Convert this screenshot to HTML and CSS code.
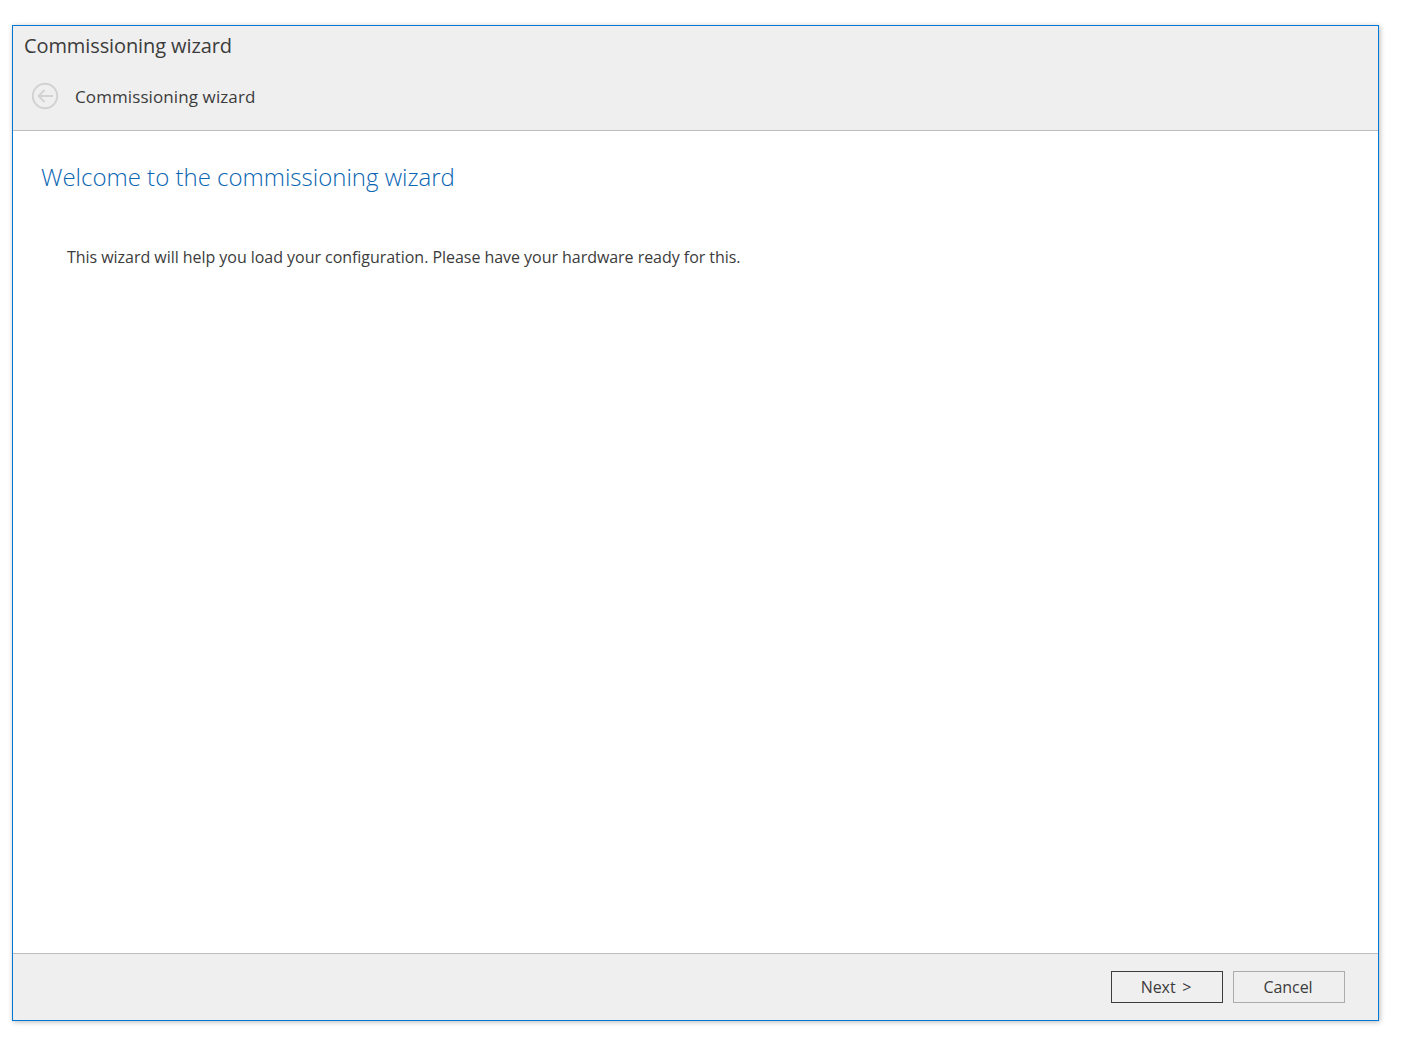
FILE: index.html
```html
<!DOCTYPE html>
<html lang="en">
<head>
<meta charset="utf-8">
<title>Commissioning wizard</title>
<link rel="stylesheet" href="styles.css">
</head>
<body>
<div class="window">
  <header class="header">
    <div class="window-title">Commissioning wizard</div>
    <div class="nav">
      <svg class="back" width="28" height="28" viewBox="0 0 28 28" aria-hidden="true">
        <circle cx="14" cy="14" r="12.2" fill="none" stroke="#d2d2d2" stroke-width="2"/>
        <path d="M22 14H7.5M13.5 8L7.5 14l6 6" fill="none" stroke="#d2d2d2" stroke-width="1.8"/>
      </svg>
      <span class="nav-title">Commissioning wizard</span>
    </div>
  </header>
  <main class="content">
    <h1 class="heading">Welcome to the commissioning wizard</h1>
    <p class="intro">This wizard will help you load your configuration. Please have your hardware ready for this.</p>
  </main>
  <footer class="footer">
    <button class="btn btn-primary" type="button">Next &gt;</button>
    <button class="btn" type="button">Cancel</button>
  </footer>
</div>
</body>
</html>
```
FILE: styles.css
```css
* { box-sizing: border-box; }
html, body { height: 100%; }
body {
  margin: 0;
  padding: 25px 27px 26px 12px;
  background: #fff;
  font-family: "Open Sans", "Noto Sans", sans-serif;
  color: #3c3c3c;
}
.window {
  height: 100%;
  display: flex;
  flex-direction: column;
  border: 1px solid #0078d4;
  box-shadow: 1px 1px 5px rgba(0, 0, 0, 0.28);
  background: #fff;
}
.header {
  height: 105px;
  flex: none;
  background: #efefef;
  border-bottom: 1px solid #bcbcbc;
  padding: 6px 0 0 11px;
}
.window-title {
  font-size: 20px;
  line-height: 28px;
  letter-spacing: -0.1px;
}
.nav {
  display: flex;
  align-items: center;
  margin-top: 22px;
  padding-left: 7px;
}
.back { flex: none; }
.nav-title {
  margin-left: 16px;
  font-size: 17px;
  line-height: 24px;
  letter-spacing: 0.1px;
  position: relative;
  top: 1px;
}
.content {
  flex: 1;
  padding: 0 28px;
}
.heading {
  margin: 28px 0 0;
  font-size: 24px;
  line-height: 36px;
  font-weight: 300;
  letter-spacing: 0;
  color: #0a66b2;
}
.intro {
  margin: 50px 0 0 26px;
  font-size: 16px;
  line-height: 24px;
  letter-spacing: -0.04px;
}
.footer {
  height: 67px;
  flex: none;
  display: flex;
  justify-content: flex-end;
  align-items: flex-start;
  gap: 10px;
  background: #efefef;
  border-top: 1px solid #bcbcbc;
  padding: 17px 33px 0 0;
}
.btn {
  width: 112px;
  height: 32px;
  padding: 0 2px 0 0;
  background: #efefef;
  border: 1px solid #acacac;
  border-radius: 0;
  font: inherit;
  font-size: 16px;
  letter-spacing: -0.05px;
  word-spacing: 2.5px;
  color: #3c3c3c;
}
.btn-primary { border-color: #3c3c3c; }
```
